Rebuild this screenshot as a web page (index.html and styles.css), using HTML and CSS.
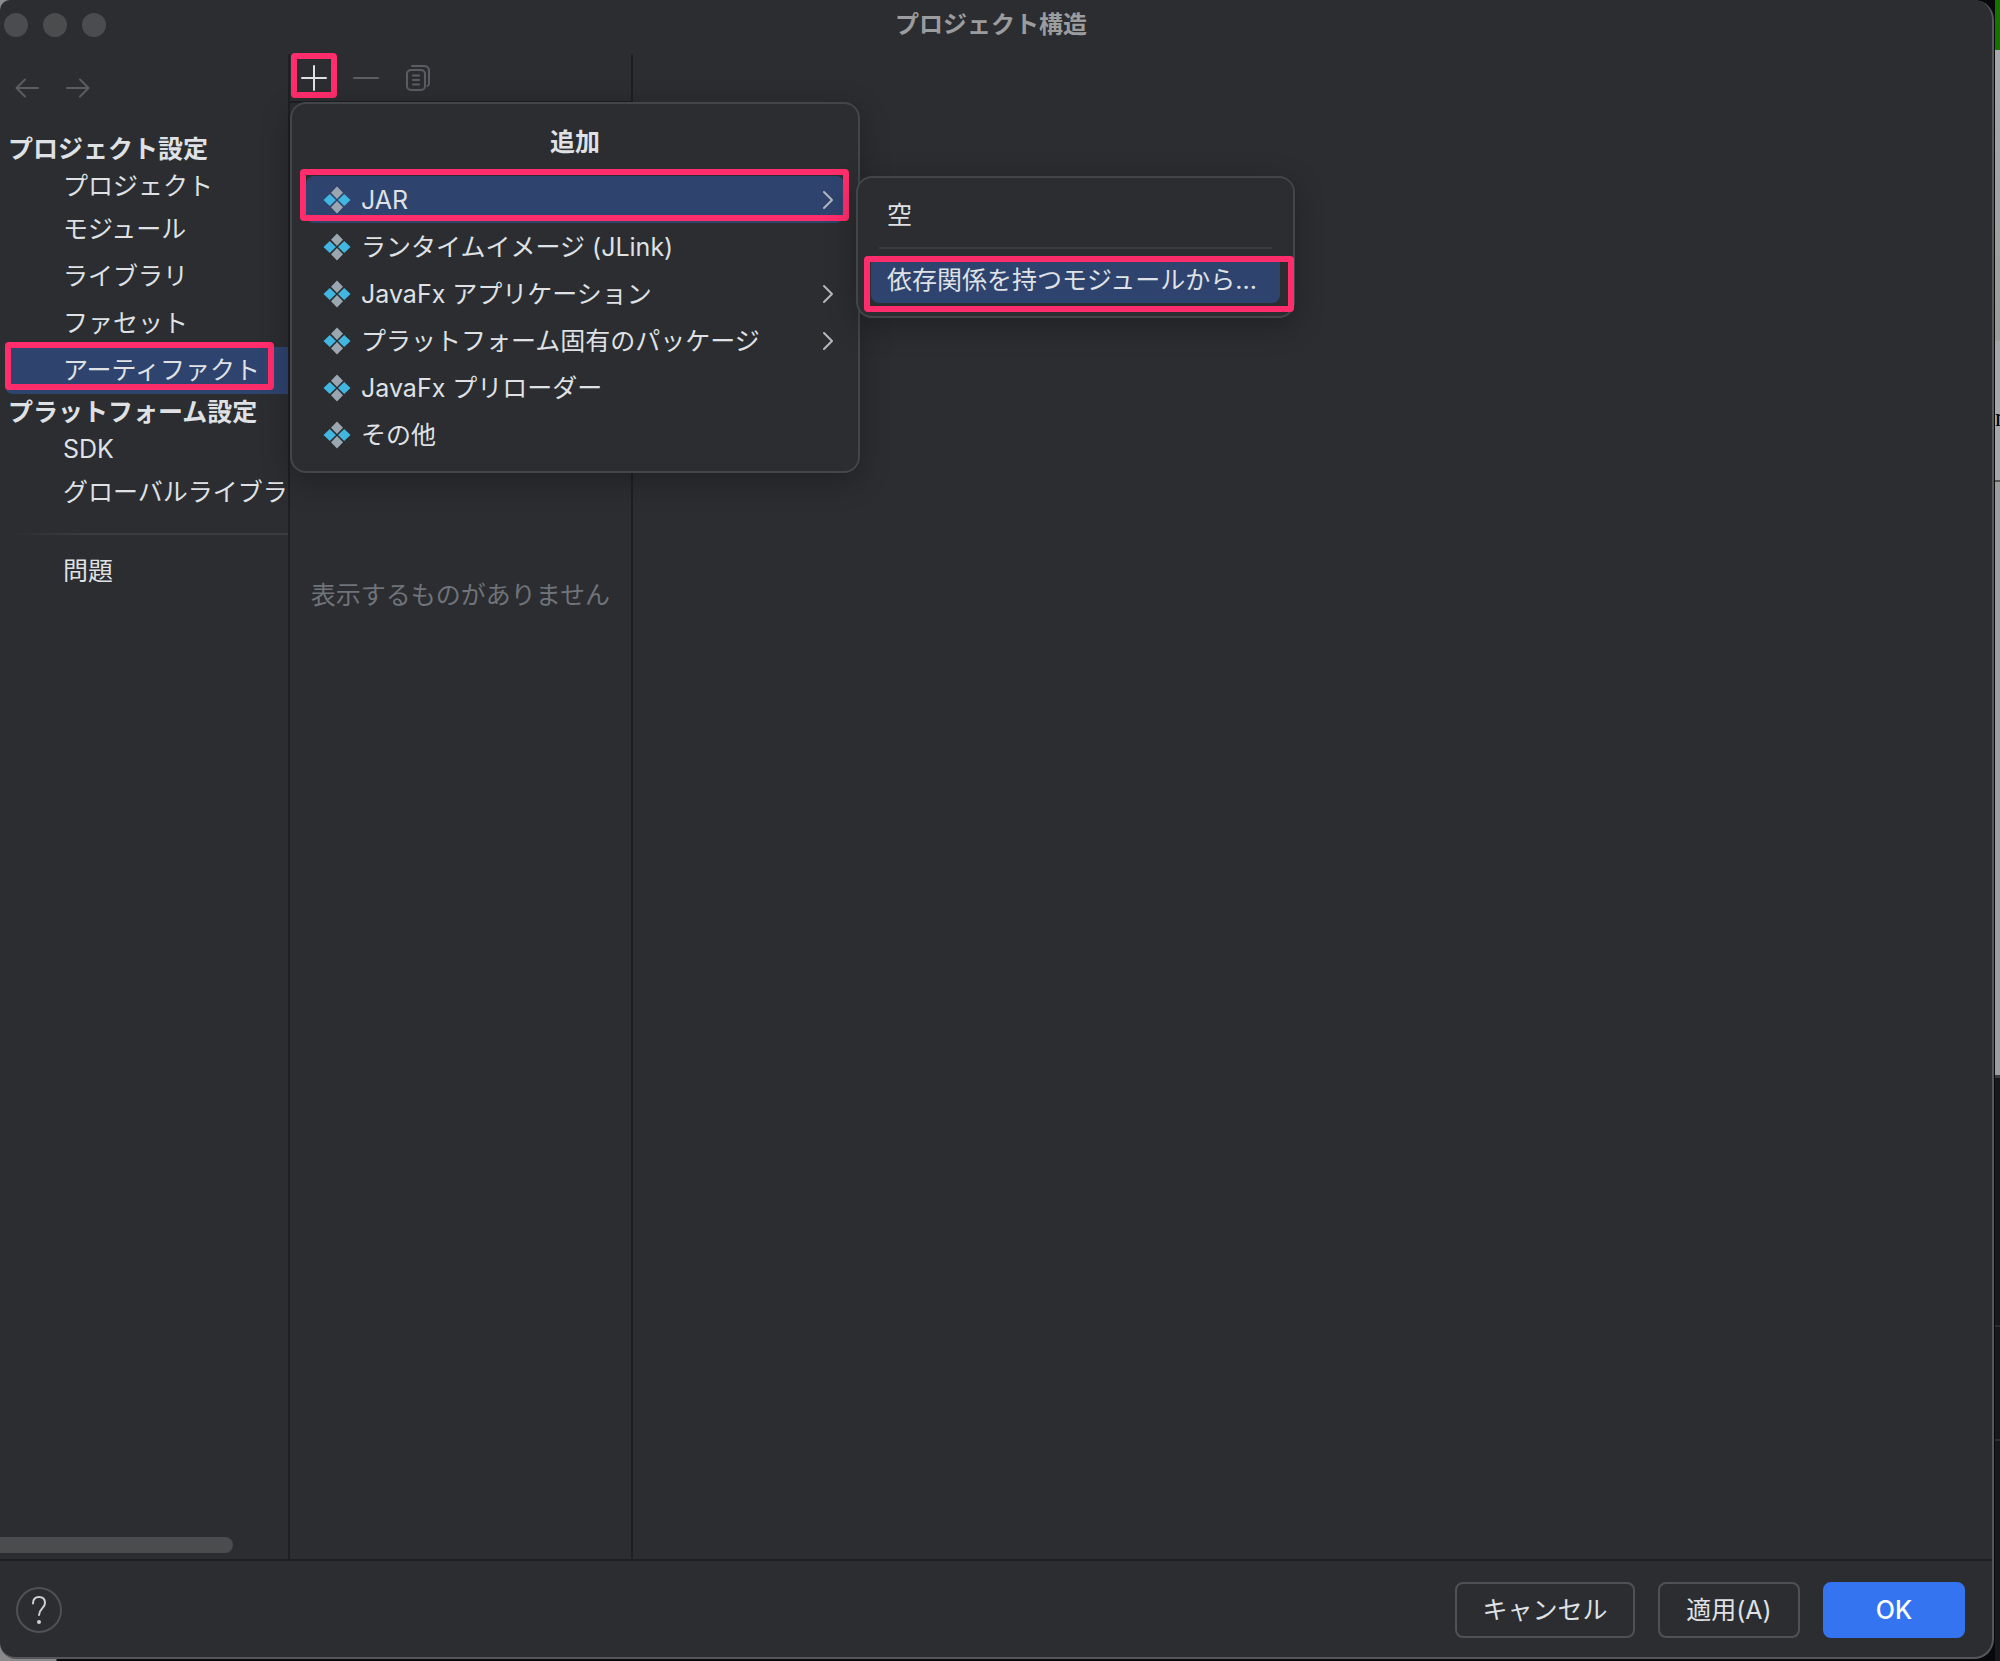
FILE: index.html
```html
<!DOCTYPE html>
<html lang="ja">
<head>
<meta charset="utf-8">
<title>プロジェクト構造</title>
<link rel="stylesheet" href="styles.css">
</head>
<body>
<svg class="defs" aria-hidden="true">
  <symbol id="artifact" viewBox="0 0 28 28">
    <path fill="#9aa7b0" d="M14 .5 20 6.800 14 13 8 6.800zM14 15l6 6.200-6 6.300-6-6.300z"/>
    <path fill="#40b6e0" d="M6.800 8 13 14l-6.200 6L.5 14zM21.200 8 27.500 14l-6.300 6L15 14z"/>
  </symbol>
  <symbol id="chevron" viewBox="0 0 12 20">
    <path fill="none" stroke="#b4b8bf" stroke-width="2" stroke-linecap="round" stroke-linejoin="round" d="M2 2l8 8-8 8"/>
  </symbol>
</svg>
<div class="screen">
  <main class="window">
    <header class="titlebar">
      <div class="lights"><i></i><i></i><i></i></div>
      <h1>プロジェクト構造</h1>
    </header>
    <div class="content">
      <aside class="sidebar">
        <div class="history">
          <button aria-label="戻る"><svg width="24" height="20" viewBox="0 0 24 20"><path d="M10 1.500 1.500 10l8.500 8.500M1.500 10H23"/></svg></button>
          <button aria-label="進む"><svg width="24" height="20" viewBox="0 0 24 20"><path d="M14 1.500 22.500 10 14 18.500M22.500 10H1"/></svg></button>
        </div>
        <nav>
          <h2>プロジェクト設定</h2>
          <a href="#project" class="first">プロジェクト</a>
          <a href="#modules">モジュール</a>
          <a href="#libraries">ライブラリ</a>
          <a href="#facets">ファセット</a>
          <a href="#artifacts" class="selected">アーティファクト</a>
          <h2>プラットフォーム設定</h2>
          <a href="#sdk" class="first">SDK</a>
          <a href="#global">グローバルライブラリ</a>
          <hr>
          <a href="#problems">問題</a>
        </nav>
        <div class="scrollbar"></div>
      </aside>
      <section class="list">
        <div class="toolbar">
          <button class="add" aria-label="追加"><svg width="26" height="26" viewBox="0 0 26 26"><path d="M13 1v24M1 13h24"/></svg></button>
          <button aria-label="削除"><svg width="26" height="26" viewBox="0 0 26 26"><path d="M1 13h24"/></svg></button>
          <button aria-label="コピー"><svg width="26" height="26" viewBox="0 0 26 26"><rect x="2" y="5" width="18" height="20" rx="4"/><path d="M7 1h12.500A4.500 4.500 0 0 1 24 5.500V18.500a3 3 0 0 1-1.500 2.500M8 10.500h6M8 15h6M8 19.500h6"/></svg></button>
        </div>
        <p class="empty">表示するものがありません</p>
        <div class="menu">
          <h3>追加</h3>
          <button class="item selected"><svg class="icon"><use href="#artifact"/></svg><span>JAR</span><svg class="arrow"><use href="#chevron"/></svg></button>
          <button class="item"><svg class="icon"><use href="#artifact"/></svg><span>ランタイムイメージ (JLink)</span></button>
          <button class="item"><svg class="icon"><use href="#artifact"/></svg><span>JavaFx アプリケーション</span><svg class="arrow"><use href="#chevron"/></svg></button>
          <button class="item"><svg class="icon"><use href="#artifact"/></svg><span>プラットフォーム固有のパッケージ</span><svg class="arrow"><use href="#chevron"/></svg></button>
          <button class="item"><svg class="icon"><use href="#artifact"/></svg><span>JavaFx プリローダー</span></button>
          <button class="item"><svg class="icon"><use href="#artifact"/></svg><span>その他</span></button>
        </div>
        <div class="submenu">
          <button class="item">空</button>
          <hr>
          <button class="item selected">依存関係を持つモジュールから...</button>
        </div>
      </section>
      <section class="detail"></section>
    </div>
    <footer class="footer">
      <button class="help" aria-label="ヘルプ"><svg width="18" height="30" viewBox="0 0 18 30"><path d="M3 8.500C3 4.500 5 2 9 2s6 2.500 6 6c0 5-6 6-6 12"/><circle cx="9" cy="27" r="2"/></svg></button>
      <button class="cancel">キャンセル</button>
      <button>適用(A)</button>
      <button class="ok">OK</button>
    </footer>
  </main>
  <div class="behind"><div class="green"></div><div class="light"><span>n</span></div><div class="dark"></div></div>
</div>
</body>
</html>
```
FILE: styles.css
```css
* { box-sizing: border-box; }
body {
  margin: 0;
  background: #08090b;
  color: #dfe1e5;
  font: 25px/36px Inter, "Noto Sans CJK JP", sans-serif;
}
h1, h2, h3, p { margin: 0; }
button { margin: 0; padding: 0; border: 0; background: none; color: inherit; font: inherit; }
hr { margin: 0; border: 0; }
svg { display: block; flex: none; }
.defs { position: absolute; width: 0; height: 0; }

.screen {
  display: flex;
  height: 100vh;
  padding-bottom: 2px;
  overflow: hidden;
  background: linear-gradient(90deg, #8a8a8c 56px, #08090b 57px);
}
.window {
  flex: 1;
  display: flex;
  flex-direction: column;
  min-width: 0;
  background: #2b2d30;
  border: solid #55575a;
  border-width: 0 2px 2px 0;
  border-radius: 10px 20px 20px 16px;
}
.titlebar {
  display: grid;
  grid-template-columns: 1fr auto 1fr;
  align-items: center;
  height: 50px;
  padding: 0 14px 0 4px;
}
.lights { display: flex; gap: 15px; }
.lights i { width: 24px; height: 24px; border-radius: 50%; background: #4b4c4e; }
.titlebar h1 { color: #9b9c9e; font-size: 24px; font-weight: 700; }

.content { flex: 1; display: flex; min-height: 0; }
.sidebar { display: flex; flex-direction: column; width: 288px; overflow: hidden; }
.history { display: flex; gap: 27px; padding: 28px 15px 33px; }
.history svg, .toolbar svg { fill: none; stroke: #5a5d63; stroke-width: 2; stroke-linecap: round; stroke-linejoin: round; }
nav { display: flex; flex-direction: column; flex: 1; }
nav h2 { padding-left: 8px; font-size: 25px; font-weight: 700; white-space: nowrap; }
nav a {
  padding-left: 63px;
  color: inherit;
  line-height: 47px;
  text-decoration: none;
  white-space: nowrap;
}
nav a.first { line-height: 39px; }
nav a.selected { position: relative; background: #2e436e; border-radius: 8px 0 0 8px; margin-left: 5px; padding-left: 58px; }
nav hr { height: 2px; margin: 17px 0 13px 10px; background: linear-gradient(90deg, #2b2d30, #393b40 25%); }
.scrollbar { width: 233px; height: 16px; margin-bottom: 6px; border-radius: 0 8px 8px 0; background: #4b4c4e; }

.list {
  position: relative;
  width: 345px;
  margin-top: 4px;
  border: solid #1e1f22;
  border-width: 0 2px;
}
.toolbar { display: flex; gap: 26px; height: 49px; padding-left: 11px; border-bottom: 2px solid #1e1f22; }
.toolbar button { position: relative; display: flex; align-items: center; justify-content: center; width: 26px; height: 47px; }
.toolbar .add svg { stroke: #dfe1e5; }
.empty { margin-top: 474px; color: #6f737a; text-align: center; white-space: nowrap; }
.detail { flex: 1; }

/* Highlight frames */
.add::after, .selected::after {
  content: "";
  position: absolute;
  border: 6px solid #ff2d6b;
  border-radius: 4px;
}
.add::after { inset: -1px -10px 3px; }
nav .selected::after { inset: -5px 14px 4px 0; }

.menu, .submenu {
  position: absolute;
  z-index: 1;
  background: #2b2d30;
  border: 2px solid #43454a;
  border-radius: 16px;
  box-shadow: 0 8px 30px #0004;
}
.menu { top: 48px; left: 0; width: 570px; padding: 20px 14px 13px; }
.menu h3 { margin-bottom: 16px; font-size: 25px; font-weight: 700; text-align: center; }
.item { position: relative; display: flex; align-items: center; width: 100%; height: 47px; text-align: left; white-space: nowrap; }
.menu .item { gap: 10px; padding: 0 10px 0 17px; }
.item.selected { background: #2e436e; border-radius: 8px; }
.icon { width: 28px; height: 28px; }
.arrow { width: 12px; height: 20px; margin-left: auto; }
.menu .selected::after { inset: -7px -5px 2px -6px; }
.submenu { top: 122px; left: 566px; z-index: 2; width: 439px; padding: 13px; }
.submenu .item { padding-left: 16px; }
.submenu hr { height: 2px; margin: 9px 8px 7px; background: #393b40; }
.submenu .selected::after { inset: 0 -14px -9px -7px; }

.footer {
  display: flex;
  align-items: center;
  gap: 23px;
  height: 98px;
  padding: 2px 27px 0 16px;
  border-top: 2px solid #1e1f22;
}
.footer button { width: 142px; height: 56px; border: 2px solid #4e5157; border-radius: 8px; }
.footer .cancel { width: 180px; }
.footer .ok { border-color: #3574f0; background: #3574f0; color: #fff; font-weight: 500; }
.footer .help { display: flex; align-items: center; justify-content: center; width: 46px; height: 46px; margin-right: auto; border-radius: 50%; }
.help path { fill: none; stroke: #ced0d6; stroke-width: 2; stroke-linecap: round; }
.help circle { fill: #ced0d6; }

.behind { display: flex; flex-direction: column; width: 6px; padding-left: 1px; margin-bottom: -2px; background: #08090b; }
.green { height: 50px; background: #157500; }
.light {
  height: 1025px;
  padding-top: 350px;
  overflow: hidden;
  background: linear-gradient(#a8a9ad, #9b9b9b 290px, #a5a7ab 291px 430px, #555 430px 432px, #9d9d9f 432px);
  color: #000;
  font-family: "Liberation Serif", serif;
}
.dark {
  flex: 1;
  background: linear-gradient(#3a3b3d 3px, #17181b 3px 250px, #2b2d30 250px 252px, #17181b 252px 364px, #2b2d30 364px 366px, #17181b 366px);
}
```
